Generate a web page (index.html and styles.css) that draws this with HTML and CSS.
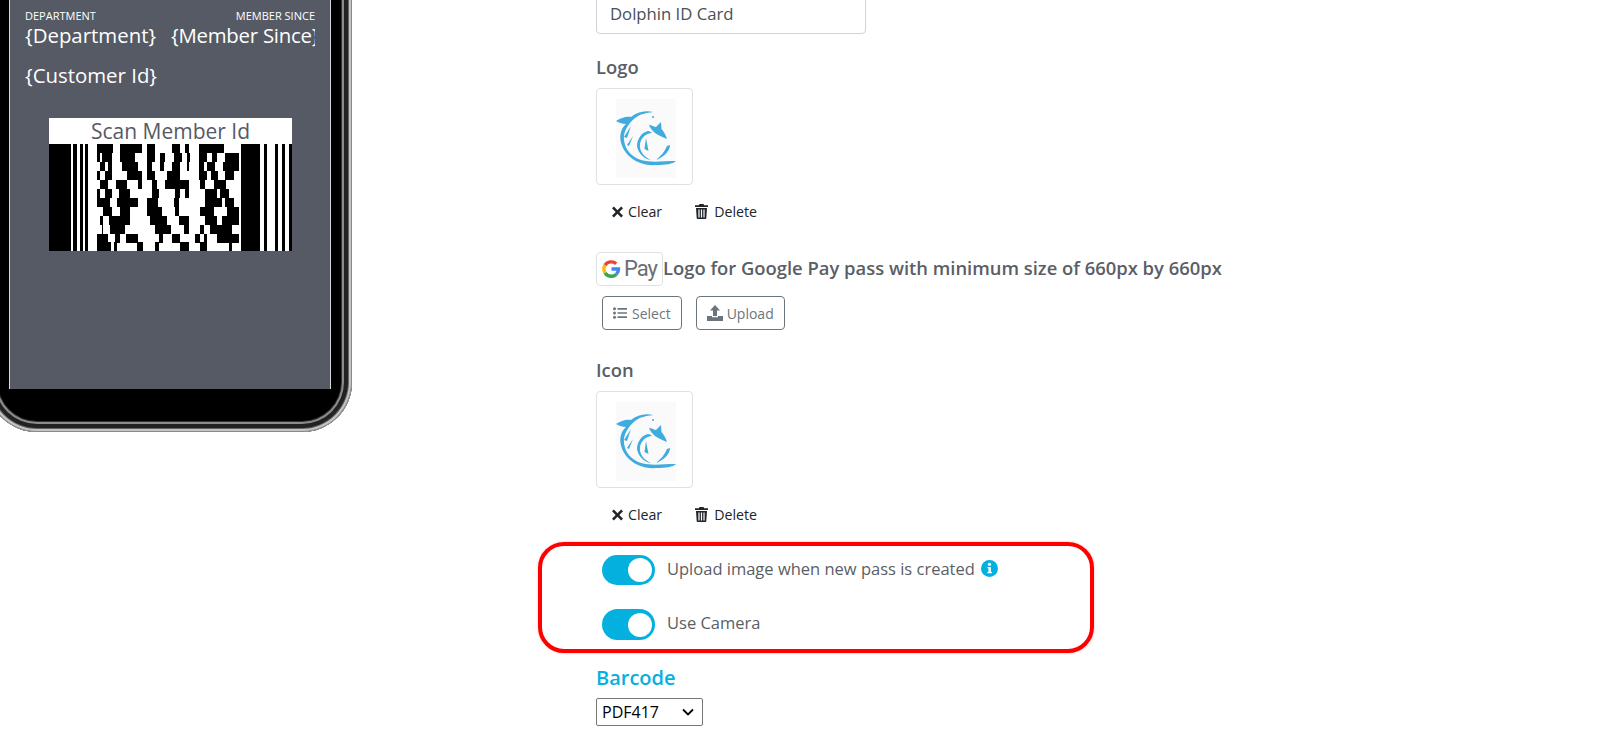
FILE: index.html
```html
<!DOCTYPE html>
<html lang="en">
<head>
<meta charset="utf-8">
<title>Dolphin ID Card</title>
<link rel="stylesheet" href="styles.css">
</head>
<body>
<svg class="defs" width="0" height="0" aria-hidden="true">
  <defs>
    <g id="dolphin" transform="translate(4 7)">
      <rect x="15" y="3" width="60" height="79" fill="#fafafa"/>
      <g fill="#2aa2dc" fill-opacity="0.9">
        <path d="M15 25C20 22 25 20 30 21C36 16 44 14 52 16C45 17 39 18 34 22C27 28 22 36 23 44C24 54 31 61 40 64C50 67 62 65 75 65C72 68 64 69 56 69C44 70 33 66 26 58C20 51 18 42 20 36C21 32 23 30 25 28C22 28 18 27 15 25Z"/>
        <path d="M51 37C45 37 40 42 39 48C38 55 43 61 50 64C43 63 37 57 36 50C36 43 41 36 47 35C49 35 50 36 51 37Z"/>
        <path d="M45 42L47.500 55L43.500 53Z"/>
        <path d="M69 49C69 55 63 61 55 64C60 60 64 55 66 50Z"/>
        <path d="M48 29C51 29 53 31 55 31L60 26L60.500 33C63 36 65 39 66 43C61 41 57 39 54 37C51 34 49 32 48 29Z"/>
        <path d="M23 41L30 30L26 42ZM26 49L32 40L28 50Z"/>
        <circle cx="52" cy="21" r="1"/>
      </g>
    </g>
    <path id="ico-x" d="M2 0.5 6 4.5 10 0.5 12 2.5 8 6.500 12 10.500 10 12.500 6 8.500 2 12.500 0 10.500 4 6.500 0 2.500Z"/>
    <path id="ico-trash" d="M4.500 0H8.500L9.200 1.300H13V3H0V1.300H3.800ZM1 4H12L11.300 14.200C11.250 14.700 10.900 15 10.400 15H2.600C2.100 15 1.750 14.700 1.700 14.200ZM3.400 5.500V13.500H4.600V5.500ZM5.900 5.500V13.500H7.100V5.500ZM8.400 5.500V13.500H9.600V5.500Z"/>
  </defs>
</svg>
<div class="page">
  <aside class="phone-col">
    <div class="phone">
      <div class="screen">
        <div class="pass-row pass-labels">
          <span>DEPARTMENT</span>
          <span>MEMBER SINCE</span>
        </div>
        <div class="pass-row pass-values">
          <span>{Department}</span>
          <span class="pass-clip">{Member Since}</span>
        </div>
        <div class="pass-customer">{Customer Id}</div>
        <div class="barcode">
          <div class="barcode-title">Scan Member Id</div>
          <svg class="barcode-bars" viewBox="27 102 728 321" preserveAspectRatio="none" shape-rendering="crispEdges">
            <rect x="27" y="102" width="728" height="321" fill="#fff"/>
            <path stroke="#000" stroke-width="321" d="M27 262.500H92M100 262.500H110M120 262.500H128M135 262.500H143M603 262.500H660M672 262.500H680M705 262.500H713M725 262.500H733M745 262.500H755"/>
            <g stroke="#000" stroke-width="27">
              <path d="M172 115H218M240 115H305M320 115H345M395 115H420M435 115H445M475 115H550"/>
              <path d="M172 142H180M187 142H215M240 142H285M320 142H345M360 142H375M400 142H425M440 142H450M475 142H500M515 142H530M555 142H595"/>
              <path d="M180 169H195M205 169H215M245 169H295M322 169H335M360 169H372M395 169H420M440 169H446M477 169H490M500 169H525M548 169H595"/>
              <path d="M172 196H180M195 196H215M262 196H305M322 196H345M380 196H420M475 196H500M512 196H532M555 196H580"/>
              <path d="M180 223H205M228 223H262M295 223H305M335 223H350M375 223H445M480 223H495M520 223H558"/>
              <path d="M172 250H180M195 250H215M238 250H270M335 250H358M405 250H420M435 250H445M495 250H530M540 250H565"/>
              <path d="M172 277H210M230 277H295M320 277H355M400 277H415M495 277H545M555 277H580"/>
              <path d="M190 304H215M240 304H270M322 304H365M405 304H415M480 304H520M560 304H595"/>
              <path d="M180 331H190M208 331H270M330 331H380M415 331H445M495 331H530M545 331H595"/>
              <path d="M185 358H190M210 358H255M345 358H392M430 358H445M480 358H490M510 358H575"/>
              <path d="M172 385H205M225 385H240M258 385H295M358 385H370M395 385H420M465 385H480M490 385H500M530 385H595"/>
              <path d="M172 410H212M222 410H232M290 410H310M345 410H358M418 410H445M480 410H500M565 410H575"/>
            </g>
          </svg>
        </div>
      </div>
    </div>
  </aside>

  <main class="form">
    <input class="text-input" type="text" value="Dolphin ID Card">

    <label class="field-label logo-label">Logo</label>
    <div class="img-card"><svg viewBox="0 0 95 95" width="95" height="95"><use href="#dolphin"/></svg></div>
    <div class="img-actions">
      <span class="img-action"><svg class="ico-x" viewBox="0 0 12 13"><use href="#ico-x"/></svg>Clear</span>
      <span class="img-action"><svg class="ico-trash" viewBox="0 0 13 15"><use href="#ico-trash"/></svg>Delete</span>
    </div>

    <div class="gpay-row">
      <span class="gpay-badge">
        <svg class="gpay-g" viewBox="0 0 20 20" fill="none" stroke-width="3.400">
          <path stroke="#ea4335" d="M4 6.200A7.500 7.500 0 0 1 15.200 4.700"/>
          <path stroke="#fbbc05" d="M4 6.200A7.500 7.500 0 0 0 4 13.800"/>
          <path stroke="#34a853" d="M4 13.800A7.500 7.500 0 0 0 15.500 15.200"/>
          <path stroke="#4285f4" d="M15.500 15.200A7.500 7.500 0 0 0 17.500 10H10.500"/>
        </svg>
        <span class="gpay-text">Pay</span>
      </span>
      <span class="field-label gpay-label">Logo for Google Pay pass with minimum size of 660px by 660px</span>
    </div>
    <div class="btn-row">
      <button class="btn" type="button">
        <svg class="btn-ico" viewBox="0 0 14 12" fill="currentColor"><circle cx="1.500" cy="1.800" r="1.500"/><circle cx="1.500" cy="6" r="1.500"/><circle cx="1.500" cy="10.200" r="1.500"/><path d="M4.500 1h9.500v1.700H4.500zM4.500 5.150h9.500v1.700H4.500zM4.500 9.300h9.500v1.700H4.500z"/></svg>Select
      </button>
      <button class="btn" type="button">
        <svg class="btn-ico btn-ico-up" viewBox="0 0 16 16" fill="currentColor"><path d="M8 0 13 5.500H10V11H6V5.500H3ZM0 11H5V12.300H11V11H16V16H0Z"/></svg>Upload
      </button>
    </div>

    <label class="field-label icon-label">Icon</label>
    <div class="img-card"><svg viewBox="0 0 95 95" width="95" height="95"><use href="#dolphin"/></svg></div>
    <div class="img-actions">
      <span class="img-action"><svg class="ico-x" viewBox="0 0 12 13"><use href="#ico-x"/></svg>Clear</span>
      <span class="img-action"><svg class="ico-trash" viewBox="0 0 13 15"><use href="#ico-trash"/></svg>Delete</span>
    </div>

    <div class="toggles">
      <div class="toggle-row">
        <span class="toggle"></span>
        <span class="toggle-text">Upload image when new pass is created</span>
        <svg class="info" viewBox="0 0 18 18"><circle cx="9" cy="9" r="9" fill="#04b1de"/><circle cx="9" cy="4.600" r="1.700" fill="#fff"/><path fill="#fff" d="M6.800 7.300H10.500V12.600H11.500V14H6.800V12.600H7.900V8.700H6.800Z"/></svg>
      </div>
      <div class="toggle-row toggle-row-2">
        <span class="toggle"></span>
        <span class="toggle-text">Use Camera</span>
      </div>
      <div class="highlight"></div>
    </div>

    <h3 class="section-title">Barcode</h3>
    <select class="barcode-select"><option>PDF417</option></select>
  </main>
</div>
</body>
</html>
```

FILE: styles.css
```css
html, body {
  margin: 0;
  height: 730px;
  overflow: hidden;
  background: #fff;
  font-family: "Open Sans", "Liberation Sans", sans-serif;
  color: #5a5e66;
}

.defs {
  display: block;
  height: 0;
}

.page {
  display: flex;
  height: 730px;
  overflow: hidden;
}

/* phone preview */
.phone-col {
  flex: 0 0 596px;
  height: 432px;
  overflow: hidden;
}

.phone {
  box-sizing: border-box;
  width: 365px;
  height: 452px;
  margin: -20px 0 0 -13px;
  padding-left: 22px;
  background: #000;
  border-radius: 0 0 50px 50px;
  box-shadow:
    inset 0 0 0 1px #8a8a8a,
    inset 0 0 0 3px #c4c4c4,
    inset 0 0 0 4px #666,
    inset 0 0 0 8px #222,
    inset 0 0 0 10px #8c8c8c,
    inset 0 0 0 11px #333;
}

.screen {
  box-sizing: border-box;
  width: 322px;
  height: 409px;
  padding: 29px 15px 0 15px;
  background: #565a64;
  border-left: 1px solid #d8d8d8;
  border-right: 1px solid #d8d8d8;
  color: #fff;
}

.pass-row {
  display: flex;
  justify-content: space-between;
  width: 290px;
}

.pass-labels {
  font-size: 11px;
  line-height: 13px;
}

.pass-values {
  font-size: 20.4px;
  line-height: 26px;
  overflow: hidden;
  white-space: nowrap;
  gap: 15px;
  justify-content: flex-start;
}

.pass-clip {
  flex: 1 1 0;
  min-width: 0;
  overflow: hidden;
  letter-spacing: -0.25px;
}

.pass-customer {
  margin-top: 14px;
  font-size: 20.4px;
  line-height: 26px;
}

.barcode {
  width: 243px;
  margin: 30px 0 0 24px;
  background: #fff;
}

.barcode-title {
  height: 26px;
  font-size: 21px;
  line-height: 27px;
  text-align: center;
  color: #565a64;
}

.barcode-bars {
  display: block;
  width: 243px;
  height: 107px;
}

/* form column */
.form {
  display: flex;
  flex-direction: column;
  align-items: flex-start;
  flex: 1;
  min-width: 0;
}

.text-input {
  box-sizing: border-box;
  width: 270px;
  height: 38px;
  margin-top: -4px;
  padding: 0 13px 4px;
  border: 1px solid #ced4da;
  border-radius: 4px;
  background: #fff;
  font: 16.7px "Open Sans", sans-serif;
  color: #495057;
}

.field-label {
  font-size: 18.4px;
  line-height: 24px;
  font-weight: 600;
  color: #5a5e66;
}

.gpay-label {
  padding-bottom: 2px;
}

.logo-label {
  margin-top: 21px;
}

.icon-label {
  margin-top: 28px;
}

.img-card {
  box-sizing: border-box;
  width: 97px;
  height: 97px;
  margin-top: 9px;
  border: 1px solid #dee2e6;
  border-radius: 4px;
}

.img-card svg {
  display: block;
}

.img-actions {
  display: flex;
  gap: 33px;
  margin: 16px 0 0 16px;
  font-size: 14.2px;
  line-height: 21px;
  color: #212529;
}

.img-action {
  display: flex;
  align-items: center;
}

.ico-x {
  width: 11px;
  height: 12px;
  margin-right: 5px;
  fill: #212529;
}

.ico-trash {
  width: 13px;
  height: 15px;
  margin-right: 6px;
  fill: #212529;
}

.gpay-row {
  display: flex;
  align-items: center;
  margin-top: 30px;
}

.gpay-badge {
  box-sizing: border-box;
  display: flex;
  align-items: center;
  width: 67px;
  height: 34px;
  padding-left: 4px;
  border: 1px solid #dee2e6;
  border-radius: 4px;
}

.gpay-g {
  width: 20px;
  height: 20px;
  flex: none;
}

.gpay-text {
  margin-left: 3px;
  font-family: Roboto, sans-serif;
  font-size: 22px;
  line-height: 30px;
  letter-spacing: -1px;
  color: #6b6f73;
}

.btn-row {
  display: flex;
  gap: 14px;
  margin: 10px 0 0 6px;
}

.btn {
  display: flex;
  align-items: center;
  box-sizing: border-box;
  height: 34px;
  padding: 0 10px;
  border: 1px solid #6c757d;
  border-radius: 4px;
  background: #fff;
  font: 14px "Open Sans", sans-serif;
  color: #6c757d;
}

.btn-ico {
  width: 14px;
  height: 12px;
  margin-right: 5px;
}

.btn-ico-up {
  width: 16px;
  height: 16px;
  margin-right: 4px;
}

.toggles {
  position: relative;
  margin: 30px 0 0 6px;
}

.toggle-row {
  display: flex;
  align-items: center;
  height: 30px;
  font-size: 16.5px;
}

.toggle-row-2 {
  margin-top: 24px;
  height: 31px;
}

.toggle {
  position: relative;
  flex: none;
  width: 53px;
  height: 100%;
  margin-right: 12px;
  border-radius: 16px;
  background: #04b1de;
}

.toggle::after {
  content: "";
  position: absolute;
  top: 50%;
  right: 3px;
  width: 24px;
  height: 24px;
  margin-top: -12px;
  border-radius: 50%;
  background: #fff;
}

.toggle-text {
  padding-bottom: 3px;
  color: #5a5e66;
  line-height: 24px;
}

.info {
  width: 17px;
  height: 17px;
  margin: 0 0 3px 6px;
}

.highlight {
  position: absolute;
  top: -13px;
  left: -64px;
  width: 556px;
  height: 111px;
  box-sizing: border-box;
  border: 4px solid #f00;
  border-radius: 26px;
  box-shadow: 0 0 2px rgba(255, 0, 0, 0.4);
}

.section-title {
  margin: 24px 0 0;
  font-size: 20px;
  line-height: 28px;
  font-weight: 600;
  color: #04b1de;
}

.barcode-select {
  box-sizing: border-box;
  width: 107px;
  height: 28px;
  margin-top: 6px;
  padding: 0 0 0 5px;
  border: 1px solid #767676;
  border-radius: 2px;
  appearance: none;
  background: #fff url("data:image/svg+xml,%3Csvg xmlns='http://www.w3.org/2000/svg' viewBox='0 0 12 8'%3E%3Cpath d='M1 1.500 6 6.500 11 1.500' fill='none' stroke='%23000' stroke-width='1.800'/%3E%3C/svg%3E") no-repeat right 8px center / 12px 8px;
  font: 16px "Open Sans", sans-serif;
  color: #000;
}
```
